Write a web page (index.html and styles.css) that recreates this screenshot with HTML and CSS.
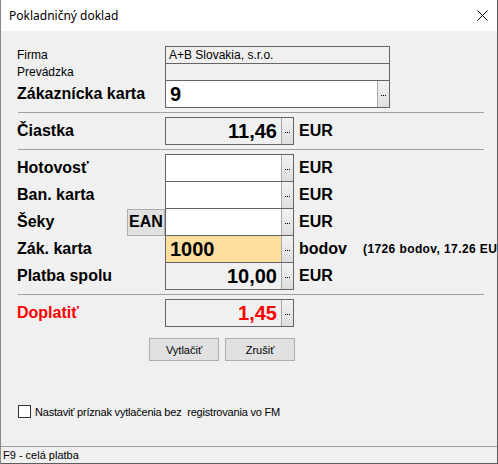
FILE: index.html
```html
<!DOCTYPE html>
<html>
<head>
<meta charset="utf-8">
<link rel="stylesheet" href="styles.css">
</head>
<body>
<div class="window">
  <div class="titlebar">
    <span class="title">Pokladničný doklad</span>
    <svg class="close" width="11" height="11" viewBox="0 0 11 11"><path d="M0.5 0.5 L10.5 10.5 M10.5 0.5 L0.5 10.5" stroke="#000" stroke-width="1" fill="none"/></svg>
  </div>
  <div class="content">
    <div class="row thin first">
      <span class="lbl small">Firma</span>
      <div class="field wide ro"><span class="val small">A+B Slovakia, s.r.o.</span></div>
    </div>
    <div class="row thin">
      <span class="lbl small">Prevádzka</span>
      <div class="field wide ro"><span class="val small"></span></div>
    </div>
    <div class="row">
      <span class="lbl">Zákaznícka karta</span>
      <div class="field wide edit"><span class="val big left">9</span><span class="dots"></span></div>
    </div>
    <div class="sep"></div>
    <div class="row first">
      <span class="lbl">Čiastka</span>
      <div class="field ro"><span class="val big">11,46</span><span class="dots"></span></div>
      <span class="unit">EUR</span>
    </div>
    <div class="sep"></div>
    <div class="row first">
      <span class="lbl">Hotovosť</span>
      <div class="field edit"><span class="val big"></span><span class="dots"></span></div>
      <span class="unit">EUR</span>
    </div>
    <div class="row">
      <span class="lbl">Ban. karta</span>
      <div class="field edit"><span class="val big"></span><span class="dots"></span></div>
      <span class="unit">EUR</span>
    </div>
    <div class="row">
      <span class="lbl split"><span>Šeky</span><span class="ean">EAN</span></span>
      <div class="field edit"><span class="val big"></span><span class="dots"></span></div>
      <span class="unit">EUR</span>
    </div>
    <div class="row">
      <span class="lbl">Zák. karta</span>
      <div class="field points"><span class="val big left">1000</span><span class="dots"></span></div>
      <span class="unit">bodov</span>
      <span class="note">(1726 bodov, 17.26 EUR)</span>
    </div>
    <div class="row">
      <span class="lbl">Platba spolu</span>
      <div class="field ro"><span class="val big">10,00</span><span class="dots"></span></div>
      <span class="unit">EUR</span>
    </div>
    <div class="sep"></div>
    <div class="row first">
      <span class="lbl red">Doplatiť</span>
      <div class="field ro"><span class="val big red">1,45</span><span class="dots"></span></div>
    </div>
    <div class="buttons">
      <button class="btn">Vytlačiť</button>
      <button class="btn">Zrušiť</button>
    </div>
    <label class="check"><span class="box"></span><span class="ctext">Nastaviť príznak vytlačenia bez&nbsp; registrovania vo FM</span></label>
  </div>
  <div class="status">F9 - celá platba</div>
</div>
</body>
</html>
```
FILE: styles.css
```css
* { box-sizing: border-box; }
html, body { margin: 0; padding: 0; background: #f0f0f0; }
.window {
  width: 498px;
  height: 464px;
  display: flex;
  flex-direction: column;
  border-left: 1px solid #8a8a8a;
  border-right: 1px solid #5e5e5e;
  border-bottom: 1px solid #5e5e5e;
  background: #f0f0f0;
  overflow: hidden;
}
.titlebar {
  height: 31px;
  background: #fff;
  display: flex;
  align-items: center;
  justify-content: space-between;
  padding: 0 9px 0 8px;
  flex: none;
}
.title {
  font-family: "Noto Sans", "Open Sans", sans-serif;
  font-size: 12px;
  color: #000;
}
.content {
  flex: 1;
  padding: 15px 0 0 16px;
  font-family: "Liberation Sans", Arial, sans-serif;
}
.row {
  display: flex;
  align-items: center;
  height: 28px;
  margin-top: -1px;
  white-space: nowrap;
}
.row.first { margin-top: 0; }
.row.thin { height: 18px; }
.lbl {
  width: 148px;
  flex: none;
  font-weight: bold;
  font-size: 16px;
  color: #000;
}
.lbl.small { font-weight: normal; font-size: 12px; }
.lbl.split { display: flex; justify-content: space-between; align-items: center; height: 100%; }
.ean {
  width: 38px;
  height: 27px;
  background: #e1e1e1;
  border: 1px solid #adadad;
  display: flex;
  align-items: center;
  justify-content: center;
  font-size: 16px;
  font-weight: bold;
}
.red { color: #ff0000; }
.field {
  width: 129px;
  height: 100%;
  border: 1px solid #646464;
  display: flex;
  flex: none;
  background: #f0f0f0;
}
.field.wide { width: 225px; }
.field.edit { background: #fff; }
.field.points { background: #ffdf9f; }
.val {
  flex: 1;
  display: flex;
  align-items: center;
  justify-content: flex-end;
  padding: 0 4px 0 2px;
  font-weight: bold;
  font-size: 20px;
  color: #000;
}
.val.left { justify-content: flex-start; padding-left: 4px; }
.val.small { font-weight: normal; font-size: 12px; justify-content: flex-start; padding-left: 3px; }
.val.red { color: #ff0000; }
.dots {
  width: 12px;
  flex: none;
  border-left: 1px solid #a8a8a8;
  background: linear-gradient(#f2f2f2, #dedede);
  display: flex;
  align-items: center;
  justify-content: center;
  padding-top: 3px;
}
.dots::before {
  content: "";
  width: 1px;
  height: 1px;
  background: #000;
  box-shadow: 2px 0 #000, 4px 0 #000;
  margin-right: 4px;
}
.unit {
  margin-left: 5px;
  font-weight: bold;
  font-size: 16px;
}
.note {
  margin-left: 16px;
  font-weight: bold;
  font-size: 12px;
  letter-spacing: 0.4px;
}
.sep {
  width: 466px;
  height: 1px;
  background: #a0a0a0;
  margin: 4px 0 4px 1px;
}
.buttons {
  display: flex;
  gap: 6px;
  margin: 11px 0 0 132px;
}
.btn {
  width: 70px;
  height: 23px;
  border: 1px solid #adadad;
  background: #e1e1e1;
  font-family: "Liberation Sans", Arial, sans-serif;
  font-size: 11px;
  color: #000;
  padding: 0;
}
.check {
  display: flex;
  align-items: center;
  margin: 44px 0 0 1px;
  font-size: 11px;
}
.box {
  width: 13px;
  height: 13px;
  border: 1px solid #333;
  background: #fff;
  margin-right: 4px;
}
.ctext { letter-spacing: -0.2px; }
.status {
  flex: none;
  height: 17px;
  border-top: 1px solid #a0a0a0;
  font-family: "Liberation Sans", Arial, sans-serif;
  font-size: 11px;
  padding: 2px 0 0 2px;
  color: #000;
}
```
